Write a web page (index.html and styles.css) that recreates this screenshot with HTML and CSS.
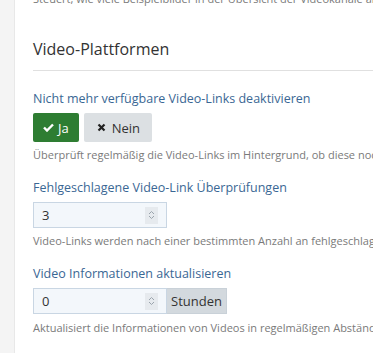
FILE: index.html
```html
<!DOCTYPE html>
<html lang="de">

<head>
    <meta charset="UTF-8">
    <title>Video-Plattformen</title>
    <link rel="stylesheet" href="styles.css">
</head>

<body>
    <div class="page">
        <div class="gutter"></div>
        <div class="panel">
            <p class="help top">Steuert, wie viele Beispielbilder in der Übersicht der Videokanäle angezeigt werden.</p>

            <h2 class="section-title">Video-Plattformen</h2>

            <div class="field">
                <label class="field-label">Nicht mehr verfügbare Video-Links deaktivieren</label>
                <div class="toggle">
                    <button class="btn btn-yes">
                        <svg class="icon" width="11" height="9" viewBox="0 0 11 9"><path d="M1 4.5 L4 7.5 L10 1.5" fill="none" stroke="#fff" stroke-width="2.4"/></svg>Ja
                    </button>
                    <button class="btn btn-no">
                        <svg class="icon" width="9" height="9" viewBox="0 0 9 9"><path d="M1.5 1.5 L7.5 7.5 M7.5 1.5 L1.5 7.5" fill="none" stroke="#222" stroke-width="2.2"/></svg>Nein
                    </button>
                </div>
                <p class="help">Überprüft regelmäßig die Video-Links im Hintergrund, ob diese noch verfügbar sind.</p>
            </div>

            <div class="field">
                <label class="field-label">Fehlgeschlagene Video-Link Überprüfungen</label>
                <div class="input-group">
                    <div class="number">
                        <span>3</span>
                        <span class="spin">
                            <svg width="7" height="10" viewBox="0 0 7 10"><path d="M1 4 L3.5 1.5 L6 4 M1 6 L3.5 8.5 L6 6" fill="none" stroke="#9aa4ad" stroke-width="1"/></svg>
                        </span>
                    </div>
                </div>
                <p class="help">Video-Links werden nach einer bestimmten Anzahl an fehlgeschlagenen Überprüfungen deaktiviert.</p>
            </div>

            <div class="field">
                <label class="field-label">Video Informationen aktualisieren</label>
                <div class="input-group">
                    <div class="number">
                        <span>0</span>
                        <span class="spin">
                            <svg width="7" height="10" viewBox="0 0 7 10"><path d="M1 4 L3.5 1.5 L6 4 M1 6 L3.5 8.5 L6 6" fill="none" stroke="#9aa4ad" stroke-width="1"/></svg>
                        </span>
                    </div>
                    <span class="addon">Stunden</span>
                </div>
                <p class="help">Aktualisiert die Informationen von Videos in regelmäßigen Abständen.</p>
            </div>
        </div>
    </div>
</body>

</html>
```

FILE: styles.css
```css
body {
    margin: 0;
    background-color: #f4f4f4;
    font-family: "Open Sans", sans-serif;
    overflow: hidden;
}

.page {
    display: flex;
    height: 353px;
}

.gutter {
    width: 14px;
    flex-shrink: 0;
}

.panel {
    flex: 1;
    background-color: #fff;
    border-left: 1px solid #e8e8e8;
    padding: 0 0 0 18px;
    white-space: nowrap;
    overflow: hidden;
}

.help {
    margin: 0;
    font-size: 11px;
    line-height: 15px;
    color: #7a7a7a;
}

.help.top {
    margin-top: -9px;
}

.section-title {
    margin: 31px 0 0;
    padding-bottom: 9px;
    font-size: 16px;
    line-height: 24px;
    font-weight: 400;
    color: #333;
    border-bottom: 1px solid #e0e0e0;
}

.field {
    margin-top: 19px;
}

.field + .field {
    margin-top: 17px;
}

.field-label {
    display: block;
    font-size: 12.5px;
    line-height: 17px;
    color: #3a6794;
    margin-bottom: 6px;
}

.toggle {
    display: flex;
    gap: 5px;
    margin-bottom: 5px;
}

.btn {
    font-family: inherit;
    font-size: 13px;
    border: none;
    border-radius: 2px;
    height: 29px;
    padding: 0 10px;
    display: flex;
    align-items: center;
}

.btn .icon {
    margin-right: 4px;
}

.btn-yes {
    background-color: #2e7d32;
    color: #fff;
}

.btn-no {
    background-color: #dce0e3;
    color: #333;
    padding: 0 12px 0 13px;
}

.btn-no .icon {
    margin-right: 6px;
}

.input-group {
    display: flex;
    margin-bottom: 5px;
}

.field:last-child .input-group {
    margin-bottom: 6px;
}

.number {
    width: 134px;
    height: 26px;
    box-sizing: border-box;
    border: 1px solid #c9d6e3;
    background-color: #f3f7fb;
    display: flex;
    align-items: center;
    justify-content: space-between;
    padding: 0 8px 0 8px;
    font-size: 13px;
    color: #333;
}

.spin {
    display: flex;
    align-items: center;
    justify-content: center;
    width: 13px;
    height: 17px;
    background-color: #e6eaee;
}

.addon {
    height: 26px;
    box-sizing: border-box;
    display: flex;
    align-items: center;
    padding: 0 4px;
    font-size: 13px;
    color: #333;
    background-color: #d3d9de;
    border: 1px solid #c9d1d8;
    border-left: none;
}
```
